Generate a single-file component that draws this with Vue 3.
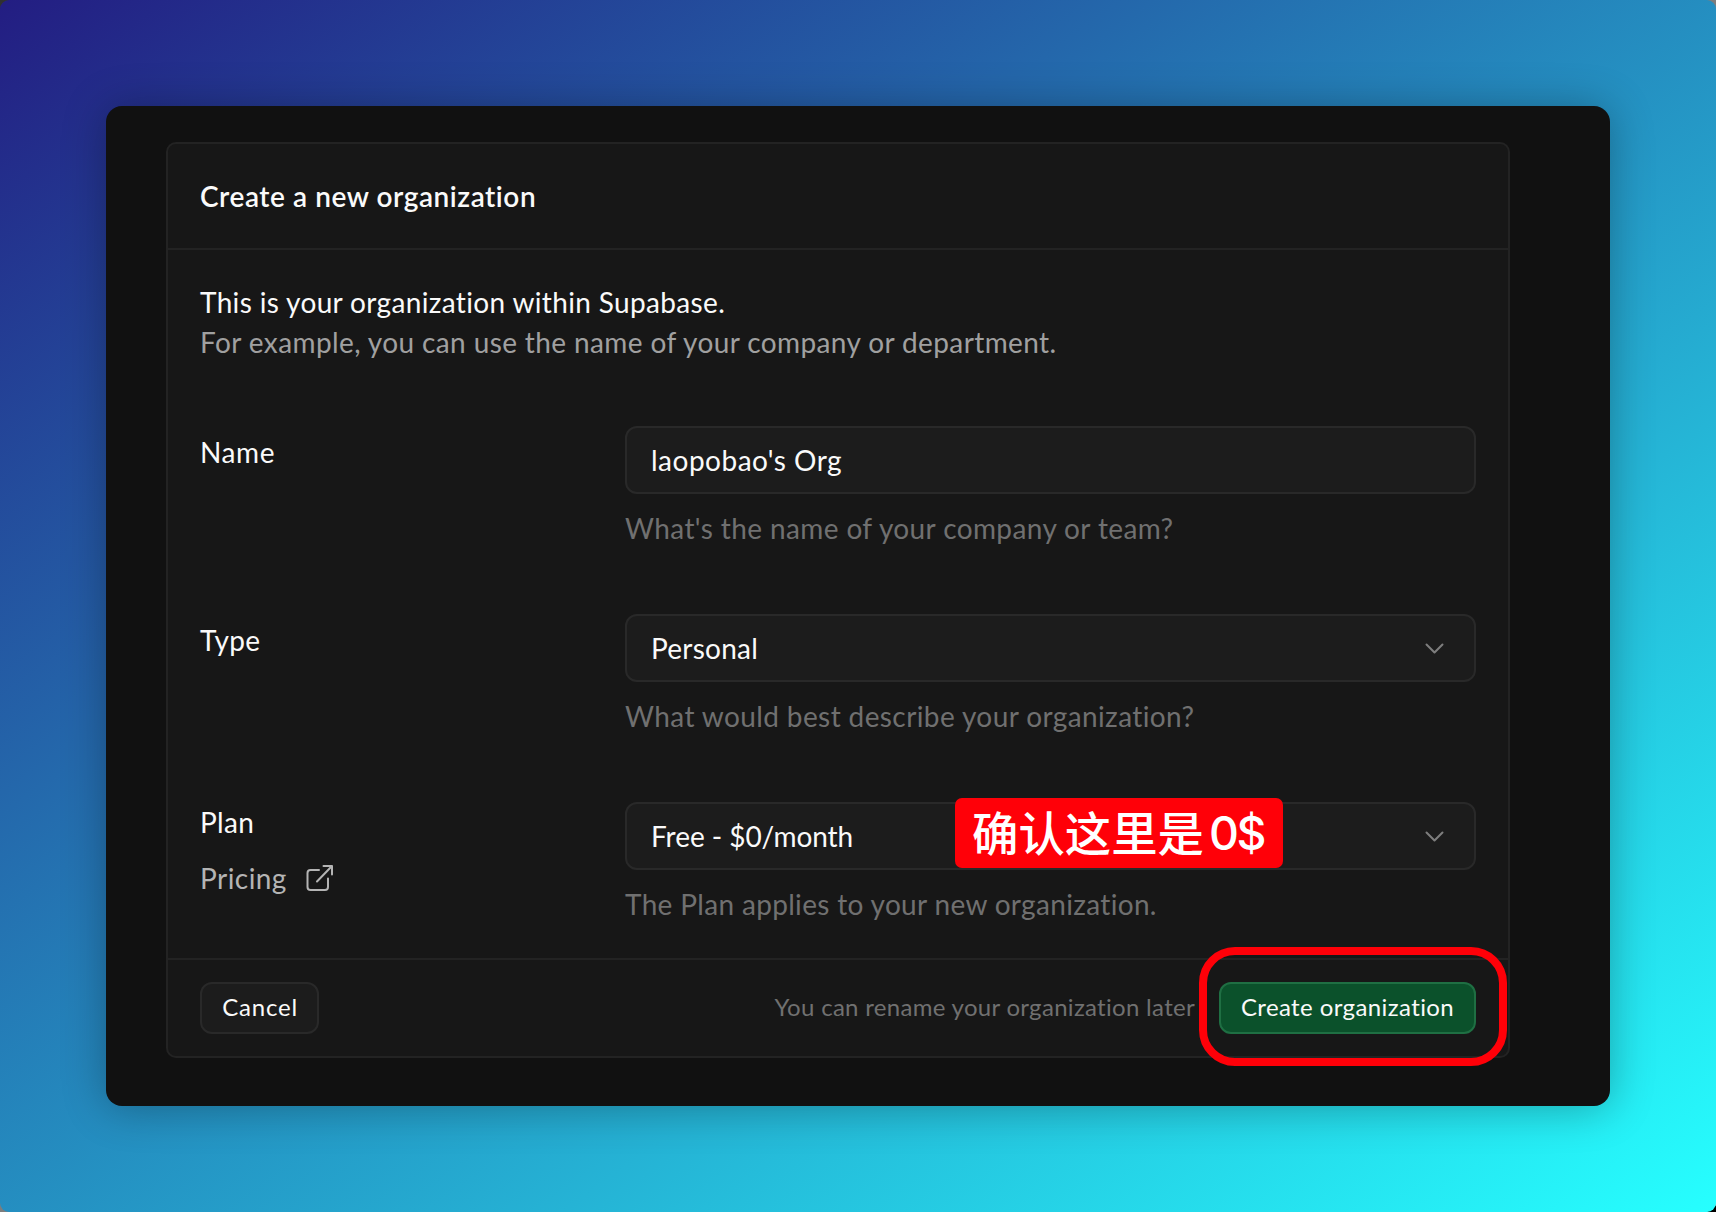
<script setup>
const chevron = 'M1.5 1.5 L9.5 9.5 L17.5 1.5'
</script>

<template>
  <div class="desktop">
    <main class="backdrop">
      <section class="window">
        <form class="card" @submit.prevent>
          <header class="card-header">
            <h1 class="title">Create a new organization</h1>
          </header>

          <div class="card-body">
            <div class="intro">
              <p class="lead">This is your organization within Supabase.</p>
              <p class="sub">For example, you can use the name of your company or department.</p>
            </div>

            <div class="row">
              <div class="labels">
                <span class="label name">Name</span>
              </div>
              <div class="field">
                <div class="control"><span class="value org">laopobao's Org</span></div>
                <p class="help">What's the name of your company or team?</p>
              </div>
            </div>

            <div class="row">
              <div class="labels">
                <span class="label">Type</span>
              </div>
              <div class="field">
                <div class="control">
                  <span class="value">Personal</span>
                  <svg class="chevron" viewBox="0 0 19 11"><path :d="chevron" /></svg>
                </div>
                <p class="help">What would best describe your organization?</p>
              </div>
            </div>

            <div class="row">
              <div class="labels plan">
                <span class="label">Plan</span>
                <a class="pricing">
                  <span>Pricing</span>
                  <svg class="external" viewBox="0 0 28 28">
                    <path d="M14 6 H5.5 Q2.5 6 2.5 9 V23 Q2.5 26 5.5 26 H20 Q23 26 23 23 V14.5" />
                    <path d="M12 17.5 L26.5 2.5" />
                    <path d="M18.5 2 H27 V10.5" />
                  </svg>
                </a>
              </div>
              <div class="field">
                <div class="control">
                  <span class="value free">Free - $0/month</span>
                  <svg class="chevron" viewBox="0 0 19 11"><path :d="chevron" /></svg>
                  <div class="note"><span class="confirm">确认这里是</span><span class="amount">0$</span></div>
                </div>
                <p class="help plan-help">The Plan applies to your new organization.</p>
              </div>
            </div>
          </div>

          <footer class="card-footer">
            <button type="button" class="btn cancel">Cancel</button>
            <div class="actions">
              <span class="hint">You can rename your organization later</span>
              <div class="highlight">
                <button type="submit" class="btn create">Create organization</button>
                <span class="ring"></span>
              </div>
            </div>
          </footer>
        </form>
      </section>
    </main>
  </div>
</template>

<style>
body {
  margin: 0;
}
</style>

<style scoped>
.desktop {
  width: 1716px;
  height: 1212px;
  overflow: hidden;
  background: linear-gradient(to bottom right, #303030, #7d7d7d 50%, #b0b0b0 99.7%, #000 99.75%);
}
.backdrop {
  box-sizing: border-box;
  height: 100%;
  padding: 106px;
  border-radius: 9px;
  background: linear-gradient(to bottom right, #231d82, #26ffff);
}
.window {
  box-sizing: border-box;
  height: 1000px;
  padding: 36px 100px 48px 60px;
  border-radius: 16px;
  background: #111;
  box-shadow: 0 2px 44px rgba(0, 0, 0, 0.3);
}
.card {
  box-sizing: border-box;
  height: 916px;
  border: 2px solid #232323;
  border-radius: 10px;
  background: #171717;
  color: #fafafa;
  font: 400 28px/40px Lato, "Liberation Sans", sans-serif;
  font-variant-ligatures: none;
  letter-spacing: 0.35px;
  white-space: nowrap;
}
.card-header {
  box-sizing: border-box;
  height: 106px;
  padding: 32px 32px 0;
  border-bottom: 2px solid #232323;
}
h1,
p {
  margin: 0;
  font: inherit;
}
.title {
  font-weight: 600;
  letter-spacing: 0.56px;
}
.card-body {
  box-sizing: border-box;
  height: 708px;
  padding: 32px 32px 0;
}
.intro {
  margin-bottom: 64px;
}
.sub {
  color: #a0a0a0;
  letter-spacing: 0.39px;
}
.row {
  display: flex;
  height: 121px;
  margin-bottom: 67px;
}
.labels {
  display: flex;
  flex-direction: column;
  gap: 16px;
  width: 425px;
  padding-top: 6px;
}
.labels.plan {
  margin-top: -6px;
}
.name {
  letter-spacing: 0.6px;
}
.pricing {
  display: flex;
  align-items: center;
  gap: 18px;
  color: #b4b4b4;
  letter-spacing: 0.45px;
}
.external {
  width: 28px;
  height: 28px;
  fill: none;
  stroke: #b4b4b4;
  stroke-width: 2;
  stroke-linecap: round;
  stroke-linejoin: round;
}
.field {
  flex: 1;
}
.control {
  position: relative;
  box-sizing: border-box;
  display: flex;
  align-items: center;
  justify-content: space-between;
  height: 68px;
  padding: 0 30px 0 24px;
  border: 2px solid #292929;
  border-radius: 12px;
  background: #1c1c1c;
}
.value {
  letter-spacing: 0.25px;
}
.value.org {
  letter-spacing: 0.5px;
}
.value.free {
  letter-spacing: -0.05px;
}
.chevron {
  width: 19px;
  height: 11px;
  fill: none;
  stroke: #7e7e7e;
  stroke-width: 2;
  stroke-linecap: round;
  stroke-linejoin: round;
}
.help {
  margin-top: 14px;
  color: #707070;
  letter-spacing: 0.39px;
}
.plan-help {
  letter-spacing: 0.33px;
}
.note {
  position: absolute;
  top: -6px;
  left: 328px;
  box-sizing: border-box;
  display: flex;
  align-items: center;
  width: 328px;
  height: 70px;
  padding-left: 17px;
  border-radius: 7px;
  background: #ff0008;
  color: #fff;
  font: 500 46.4px/66px "Noto Sans CJK SC", sans-serif;
  letter-spacing: 0;
}
.confirm {
  padding-bottom: 4px;
}
.amount {
  margin-left: 5px;
  font-family: Inter, sans-serif;
  letter-spacing: -2.5px;
}
.card-footer {
  box-sizing: border-box;
  display: flex;
  align-items: center;
  justify-content: space-between;
  height: 98px;
  padding: 0 32px;
  border-top: 2px solid #232323;
  font-size: 24px;
}
.actions {
  display: flex;
  align-items: center;
  gap: 24px;
}
.hint {
  padding-bottom: 2px;
  color: #707070;
  letter-spacing: 0.3px;
}
.highlight {
  position: relative;
}
.btn {
  box-sizing: border-box;
  display: block;
  height: 52px;
  padding: 0 0 2px;
  border: 2px solid #292929;
  border-radius: 12px;
  background: #1c1c1c;
  color: #fafafa;
  font: inherit;
  font-variant-ligatures: none;
  letter-spacing: 0.4px;
}
.cancel {
  width: 119px;
  padding-left: 1px;
  letter-spacing: 0.8px;
}
.create {
  width: 257px;
  border-color: #1f6f43;
  background: #0b512b;
}
.ring {
  position: absolute;
  top: -35px;
  left: -20px;
  box-sizing: border-box;
  width: 308px;
  height: 119px;
  border: 8px solid #ff0008;
  border-radius: 36px;
}
</style>
